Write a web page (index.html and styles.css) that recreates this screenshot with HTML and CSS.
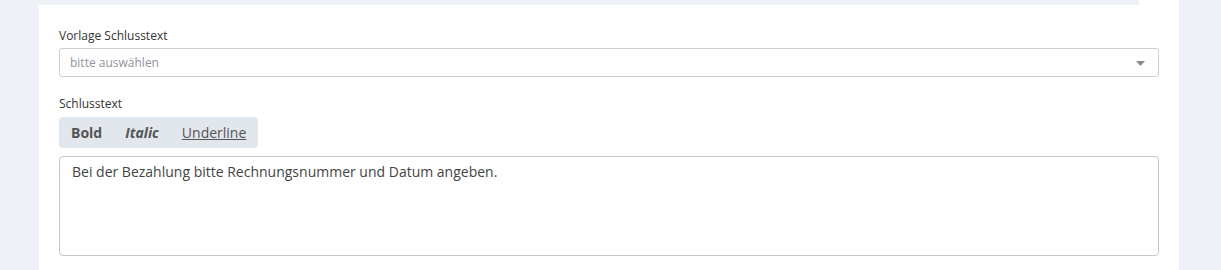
FILE: index.html
```html
<!DOCTYPE html>
<html lang="de">
<head>
  <meta charset="UTF-8">
  <meta name="viewport" content="width=device-width, initial-scale=1.0">
  <title>Schlusstext</title>
  <link rel="stylesheet" href="styles.css">
</head>
<body>

  <!-- Seite -->
  <div class="page">
    <div class="panel">
      <div class="panel-top"></div>

      <!-- Vorlage auswählen -->
      <div class="form-group">
        <label class="label" for="template">Vorlage Schlusstext</label>
        <div class="select" id="template">
          <span class="placeholder">bitte auswählen</span>
          <svg class="caret" width="9" height="5" viewBox="0 0 9 5"><path d="M0 0h9L4.5 5z" fill="#8c8c8c"/></svg>
        </div>
      </div>

      <!-- Schlusstext -->
      <div class="form-group">
        <label class="label" for="closing-text">Schlusstext</label>
        <div class="toolbar">
          <button class="tool tool-bold">Bold</button>
          <button class="tool tool-italic">Italic</button>
          <button class="tool tool-underline">Underline</button>
        </div>
        <textarea class="editor" id="closing-text">Bei der Bezahlung bitte Rechnungsnummer und Datum angeben.</textarea>
      </div>
    </div>
  </div>

</body>
</html>
```

FILE: styles.css
```css
/* body */
body {
  margin: 0;
  background-color: #eef1f6;
  font-family: "Open Sans", Arial, sans-serif;
  color: #333;
}

/* seite */
.page {
  padding-left: 39px;
  height: 270px;
}

.panel {
  width: 1140px;
  height: 100%;
  background-color: #ffffff;
  padding: 0 20px;
  box-sizing: border-box;
}

/* streifen oben */
.panel-top {
  height: 5px;
  width: 1100px;
  margin-left: -20px;
  background-color: #eef1f6;
  margin-bottom: 22px;
}

/* formular */
.form-group {
  margin-bottom: 18px;
}

.label {
  display: block;
  font-size: 12px;
  line-height: 17px;
  color: #333;
  margin-bottom: 4px;
}

.form-group + .form-group .label {
  margin-bottom: 5px;
}

/* auswahl */
.select {
  display: flex;
  justify-content: space-between;
  align-items: center;
  height: 29px;
  padding: 0 13px 0 10px;
  border: 1px solid #c9ced8;
  border-radius: 3px;
  box-sizing: border-box;
}

.placeholder {
  font-size: 12px;
  color: #8f949c;
}

.caret {
  margin-top: 1px;
}

/* werkzeugleiste */
.toolbar {
  display: inline-flex;
  height: 31px;
  background-color: #e2e6ed;
  border-radius: 4px;
  margin-bottom: 8px;
}

.tool {
  border: none;
  background: none;
  padding: 0 11.5px;
  font-family: "Open Sans", Arial, sans-serif;
  font-size: 14px;
  color: #555;
  cursor: pointer;
}

.tool-bold {
  padding-left: 12px;
  font-weight: 700;
}

.tool-italic {
  font-weight: 700;
  font-style: italic;
}

.tool-underline {
  text-decoration: underline;
}

/* texteingabe */
.editor {
  display: block;
  width: 100%;
  height: 100px;
  padding: 5px 12px;
  border: 1px solid #c8c8c8;
  border-radius: 4px;
  box-sizing: border-box;
  font-family: "Open Sans", Arial, sans-serif;
  font-size: 14px;
  line-height: 20px;
  color: #444;
  resize: none;
  outline: none;
}
```
